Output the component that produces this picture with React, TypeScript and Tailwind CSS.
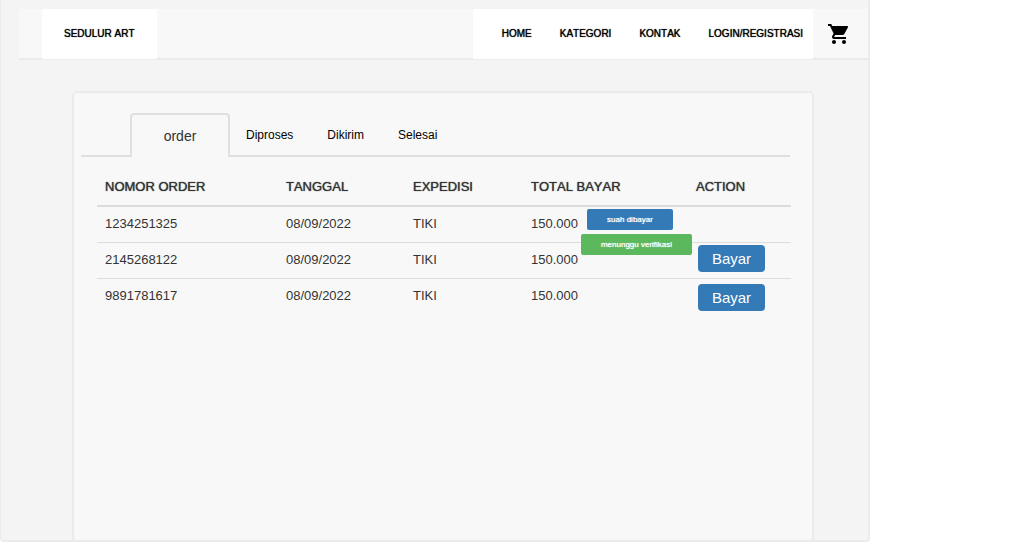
import React from "react";
import { MdShoppingCart } from "react-icons/md";

type Order = {
  id: string;
  date: string;
  courier: string;
  total: string;
  payable: boolean;
};

const orders: Order[] = [
  { id: "1234251325", date: "08/09/2022", courier: "TIKI", total: "150.000", payable: false },
  { id: "2145268122", date: "08/09/2022", courier: "TIKI", total: "150.000", payable: true },
  { id: "9891781617", date: "08/09/2022", courier: "TIKI", total: "150.000", payable: true },
];

function Header() {
  return (
    <header className="ml-[18px] flex h-[51px] border-b-2 border-[#e9e9e9] bg-[#f8f8f8] text-[10px] leading-4 text-black [text-shadow:0_0_1px_#000]">
      <a
        href="#"
        className="ml-[23px] flex h-[51px] w-[115px] items-center rounded-xs border-b border-[#ececec] bg-white pl-[22px]"
      >
        SEDULUR ART
      </a>
      <nav className="ml-auto flex h-[51px] items-center gap-7 rounded-xs border-b border-[#ececec] bg-white pr-[10px] pl-[29px]">
        <a href="#">HOME</a>
        <a href="#">KATEGORI</a>
        <a href="#">KONTAK</a>
        <a href="#">LOGIN/REGISTRASI</a>
      </nav>
      <a href="#" aria-label="Keranjang" className="flex w-[55px] items-center pl-[14px]">
        <MdShoppingCart size={24} />
      </a>
    </header>
  );
}

function Tabs() {
  return (
    <div className="mr-[22px] ml-[7px] flex h-[44px] text-xs text-black">
      <div className="w-[49px] border-b-2 border-[#dfdfdf]" />
      <button className="w-[100px] rounded-t-[4px] border-2 border-b-0 border-[#dfdfdf] text-sm text-[#333]">
        order
      </button>
      <div className="flex flex-1 items-center gap-[34px] border-b-2 border-[#dfdfdf] pt-[2px] pl-4">
        <button>Diproses</button>
        <button>Dikirim</button>
        <button>Selesai</button>
      </div>
    </div>
  );
}

function OrderTable() {
  return (
    <div className="mr-[21px] ml-[23px]">
      <table className="w-full table-fixed border-separate border-spacing-0 text-left text-[13px] leading-5 text-[#333]">
        <colgroup>
          <col className="w-[181px]" />
          <col className="w-[127px]" />
          <col className="w-[118px]" />
          <col className="w-[165px]" />
          <col />
        </colgroup>
        <thead>
          <tr className="h-[50px] [text-shadow:0_0_1px_#333]">
            {["NOMOR ORDER", "TANGGAL", "EXPEDISI", "TOTAL BAYAR", "ACTION"].map((title) => (
              <th key={title} className="border-b-2 border-[#dcdcdc] pt-[11px] pl-2 align-middle font-normal">
                {title}
              </th>
            ))}
          </tr>
        </thead>
        <tbody className="[&>tr:last-child>td]:border-b-0 [&>tr:last-child>td:last-child]:pt-[5px]">
          {orders.map((order, index) => (
            <tr key={order.id} className="h-9 align-top [&>td]:border-b [&>td]:border-[#dcdcdc]">
              <td className="pt-[7px] pl-2">{order.id}</td>
              <td className="pt-[7px] pl-2">{order.date}</td>
              <td className="pt-[7px] pl-2">{order.courier}</td>
              <td className="relative pt-[7px] pl-2">
                {order.total}
                {index === 0 && (
                  <div className="absolute top-[2px] left-[58px] z-10 text-[8px] leading-[21px] whitespace-nowrap text-white [text-shadow:0_0_1px_#fff]">
                    <span className="ml-[6px] block w-[86px] rounded-xs bg-[#337ab7] text-center">
                      suah dibayar
                    </span>
                    <span className="mt-1 block w-[111px] rounded-xs bg-[#5cb85c] text-center">
                      menunggu verifikasi
                    </span>
                  </div>
                )}
              </td>
              <td className="pt-[2px] pl-[10px]">
                {order.payable && (
                  <button className="block h-[27px] w-[67px] rounded bg-[#337ab7] text-[15px] leading-[27px] text-white">
                    Bayar
                  </button>
                )}
              </td>
            </tr>
          ))}
        </tbody>
      </table>
    </div>
  );
}

export default function App() {
  return (
    <div className="mr-[158px] rounded-b-[4px] border-r-2 border-b-2 border-l border-[#ebebeb] bg-[#f4f4f4] pt-[9px] font-['Liberation_Sans',Arial,sans-serif] [font-kerning:none]">
      <Header />
      <main className="mt-[31px] mr-[54px] -mb-[2px] ml-[71px] min-h-[451px] rounded-[5px] border-2 border-[#ebebeb] bg-[#f8f8f8] pt-5">
        <Tabs />
        <OrderTable />
      </main>
    </div>
  );
}
